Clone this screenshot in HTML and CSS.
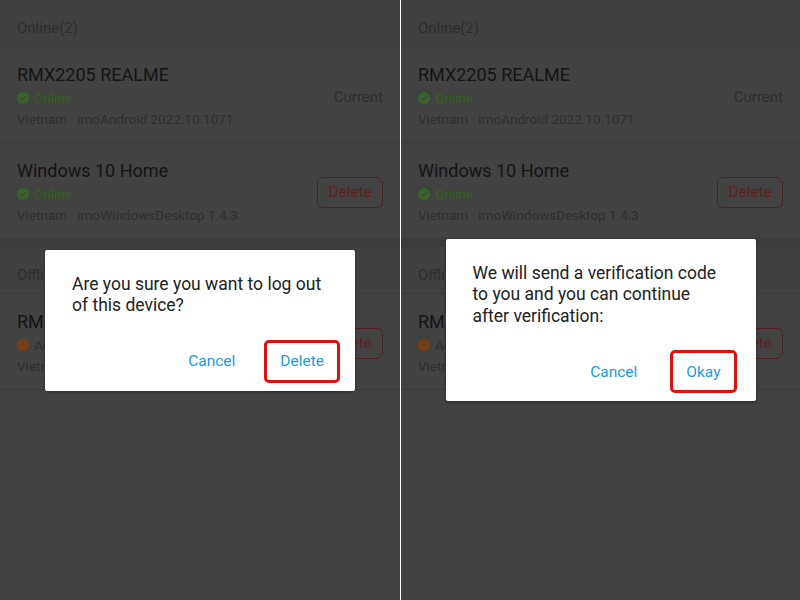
FILE: index.html
```html
<!DOCTYPE html>
<html lang="en">
<head>
    <meta charset="UTF-8">
    <meta name="viewport" content="width=device-width, initial-scale=1.0">
    <title>imo - Devices</title>
    <link rel="stylesheet" href="styles.css">
</head>
<body>
    <div class="screens">
        <!-- left: log out confirm -->
        <div class="screen">
            <div class="device-list">
                <div class="section-title">Online(2)</div>
                <div class="device">
                    <div class="device-info">
                        <div class="device-name">RMX2205 REALME</div>
                        <div class="status online">
                            <svg class="status-icon" viewBox="0 0 12 12"><circle cx="6" cy="6" r="6" fill="#37662a"/><path d="M3.3 6.2 L5.2 8 L8.8 4.3" fill="none" stroke="#454545" stroke-width="1.5"/></svg>
                            Online
                        </div>
                        <div class="device-meta">Vietnam · imoAndroid 2022.10.1071</div>
                    </div>
                    <div class="current">Current</div>
                </div>
                <div class="device">
                    <div class="device-info">
                        <div class="device-name">Windows 10 Home</div>
                        <div class="status online">
                            <svg class="status-icon" viewBox="0 0 12 12"><circle cx="6" cy="6" r="6" fill="#37662a"/><path d="M3.3 6.2 L5.2 8 L8.8 4.3" fill="none" stroke="#454545" stroke-width="1.5"/></svg>
                            Online
                        </div>
                        <div class="device-meta">Vietnam · imoWindowsDesktop 1.4.3</div>
                    </div>
                    <button class="delete-btn">Delete</button>
                </div>
                <div class="band"></div>
                <div class="section-title">Offline(1)</div>
                <div class="device">
                    <div class="device-info">
                        <div class="device-name">RMX1941 REALME</div>
                        <div class="status away">
                            <svg class="status-icon" viewBox="0 0 12 12"><circle cx="6" cy="6" r="6" fill="#7a4014"/><path d="M6 3 V6.3 H3.6" fill="none" stroke="#454545" stroke-width="1.3"/></svg>
                            Active 2 days ago
                        </div>
                        <div class="device-meta">Vietnam · imoAndroid 2022.09.1051</div>
                    </div>
                    <button class="delete-btn">Delete</button>
                </div>
            </div>
            <div class="overlay">
                <div class="dialog">
                    <p class="dialog-text">Are you sure you want to log out<br>of this device?</p>
                    <div class="dialog-actions">
                        <button class="action">Cancel</button>
                        <button class="action marked">Delete</button>
                    </div>
                </div>
            </div>
        </div>

        <div class="divider"></div>

        <!-- right: verification -->
        <div class="screen">
            <div class="device-list">
                <div class="section-title">Online(2)</div>
                <div class="device">
                    <div class="device-info">
                        <div class="device-name">RMX2205 REALME</div>
                        <div class="status online">
                            <svg class="status-icon" viewBox="0 0 12 12"><circle cx="6" cy="6" r="6" fill="#37662a"/><path d="M3.3 6.2 L5.2 8 L8.8 4.3" fill="none" stroke="#454545" stroke-width="1.5"/></svg>
                            Online
                        </div>
                        <div class="device-meta">Vietnam · imoAndroid 2022.10.1071</div>
                    </div>
                    <div class="current">Current</div>
                </div>
                <div class="device">
                    <div class="device-info">
                        <div class="device-name">Windows 10 Home</div>
                        <div class="status online">
                            <svg class="status-icon" viewBox="0 0 12 12"><circle cx="6" cy="6" r="6" fill="#37662a"/><path d="M3.3 6.2 L5.2 8 L8.8 4.3" fill="none" stroke="#454545" stroke-width="1.5"/></svg>
                            Online
                        </div>
                        <div class="device-meta">Vietnam · imoWindowsDesktop 1.4.3</div>
                    </div>
                    <button class="delete-btn">Delete</button>
                </div>
                <div class="band"></div>
                <div class="section-title">Offline(1)</div>
                <div class="device">
                    <div class="device-info">
                        <div class="device-name">RMX1941 REALME</div>
                        <div class="status away">
                            <svg class="status-icon" viewBox="0 0 12 12"><circle cx="6" cy="6" r="6" fill="#7a4014"/><path d="M6 3 V6.3 H3.6" fill="none" stroke="#454545" stroke-width="1.3"/></svg>
                            Active 2 days ago
                        </div>
                        <div class="device-meta">Vietnam · imoAndroid 2022.09.1051</div>
                    </div>
                    <button class="delete-btn">Delete</button>
                </div>
            </div>
            <div class="overlay">
                <div class="dialog">
                    <p class="dialog-text">We will send a verification code<br>to you and you can continue<br>after verification:</p>
                    <div class="dialog-actions wide">
                        <button class="action">Cancel</button>
                        <button class="action marked">Okay</button>
                    </div>
                </div>
            </div>
        </div>
    </div>
</body>
</html>
```

FILE: styles.css
```css
body { margin: 0; background-color: #424242; font-family: Roboto, "Noto Sans", sans-serif; }
.screens { display: grid; grid-template-columns: 400px 1px 399px; width: 800px; height: 600px; overflow: hidden; }
.divider { background-color: #ffffff; }
.screen { position: relative; background-color: #424242; }

.band { height: 8px; background-color: #3b3b3b; }
.section-title { padding: 18px 17px 8px; line-height: 20px; font-size: 15px; color: #2c2c2c; background-color: #404040; border-bottom: 1px solid #3a3a3a; }
.device { display: flex; align-items: center; justify-content: space-between; padding: 16px 17px 13px; border-bottom: 1px solid #3a3a3a; }
.device-name { font-size: 18px; line-height: 24px; color: #141414; }
.status { display: flex; align-items: center; gap: 5px; font-size: 13.5px; line-height: 22px; }
.status-icon { width: 12px; height: 12px; }
.online { color: #35621f; }
.away { color: #2d2d2d; }
.device-meta { font-size: 13.5px; line-height: 20px; color: #2d2d2d; }
.current { font-size: 15px; color: #2d2d2d; padding-top: 2px; }
.delete-btn { font-family: inherit; font-size: 15.5px; color: #5a2020; background: none; border: 1px solid #4f1e1e; border-radius: 6px; padding: 0 10px; height: 31px; }

.overlay { position: absolute; top: 40px; left: 0; right: 0; bottom: 0; display: flex; align-items: center; justify-content: center; }
.dialog { width: 310px; background-color: #ffffff; border-radius: 2px; box-shadow: 0 1px 3px rgba(0, 0, 0, 0.4); }
.dialog-text { margin: 0; padding: 24px 27px 0; font-size: 17.5px; line-height: 21.5px; color: #222222; }
.dialog-actions { display: flex; justify-content: flex-end; gap: 13px; padding: 23px 15px 8px; }
.dialog-actions.wide { gap: 17px; padding-right: 19px; }
.action { font-family: inherit; font-size: 15.5px; color: #1f9ae0; background: none; border: 3px solid transparent; border-radius: 5px; padding: 0 13px; height: 43px; }
.marked { border-color: #e01010; }
```
